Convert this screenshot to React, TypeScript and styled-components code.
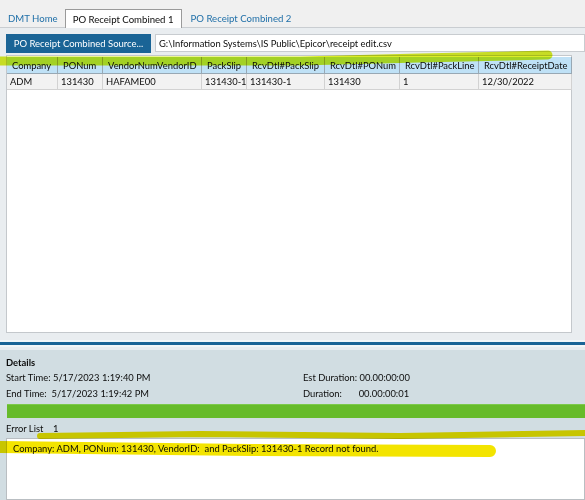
import React from "react";
import styled, { createGlobalStyle } from "styled-components";

const Global = createGlobalStyle`
  html, body { margin: 0; padding: 0; }
  body { width: 585px; height: 500px; overflow: hidden; font-family: Lato, "Liberation Sans", sans-serif; font-size: 9.4px; color: #0c0c0c; }
  * { box-sizing: border-box; }
`;

const Page = styled.div`
  position: relative;
  width: 585px;
  height: 500px;
  display: flex;
  flex-direction: column;
  background: #f0f0f0;
  overflow: hidden;
`;

const TabBar = styled.div`
  height: 28px;
  display: flex;
  align-items: flex-end;
  gap: 6px;
  padding-left: 7px;
  border-bottom: 1px solid #c9cdd1;
`;

const Tab = styled.div<{ $active?: boolean }>`
  height: 19px;
  padding: 0 ${(p) => (p.$active ? "7px" : "0")};
  margin-bottom: ${(p) => (p.$active ? "-1px" : "0")};
  margin-right: ${(p) => (p.$active ? "2px" : "0")};
  display: flex;
  align-items: center;
  white-space: nowrap;
  font-size: 9.6px;
  color: ${(p) => (p.$active ? "#0c0c0c" : "#1f6fa8")};
  background: ${(p) => (p.$active ? "#ffffff" : "transparent")};
  border: 1px solid ${(p) => (p.$active ? "#9a9a9a" : "transparent")};
  border-bottom: none;
`;

const Main = styled.div`
  height: 308px;
  background: #e9edf0;
  padding: 6px 13px 3px 6px;
  display: flex;
  flex-direction: column;
  gap: 2px;
`;

const SourceRow = styled.div`
  display: flex;
  gap: 4px;
  margin-right: -13px;
`;

const SourceButton = styled.div`
  width: 145px;
  height: 19px;
  background: #1a6496;
  color: #ffffff;
  font-size: 9.5px;
  display: flex;
  align-items: center;
  justify-content: center;
  white-space: nowrap;
`;

const PathInput = styled.div`
  flex: 1;
  height: 18px;
  background: #ffffff;
  border: 1px solid #c8ccd0;
  display: flex;
  align-items: center;
  padding-left: 3px;
  white-space: nowrap;
  overflow: hidden;
`;

const Grid = styled.div`
  flex: 1;
  background: #ffffff;
  border: 1px solid #c4c8cc;
  padding: 1px 0 0 0;
`;

const GridRow = styled.div`
  display: grid;
  grid-template-columns: 51px 45px 99px 45px 78px 75px 79px 93px;
`;

const HeadCell = styled.div`
  height: 17px;
  background: #bfe1f6;
  border-right: 1px solid #98a8b4;
  border-bottom: 1px solid #98a8b4;
  display: flex;
  align-items: center;
  padding-left: 5px;
  white-space: nowrap;
  overflow: hidden;
`;

const Cell = styled.div`
  height: 16px;
  background: #f2f2f2;
  border-right: 1px solid #d2d2d2;
  border-bottom: 1px solid #d2d2d2;
  display: flex;
  align-items: center;
  padding-left: 3px;
  white-space: nowrap;
  overflow: hidden;
`;

const Splitter = styled.div`
  height: 14px;
  background: #e9edf0;
  display: flex;
  flex-direction: column;
  justify-content: center;
`;

const SplitLine = styled.div`
  height: 7px;
  border-top: 2px solid #f2f6f8;
  border-bottom: 2px solid #f2f6f8;
  background: #1a6496;
`;

const Details = styled.div`
  flex: 1;
  background: #d1dde2;
  padding: 5px 0 0 6px;
  display: flex;
  flex-direction: column;
`;

const Title = styled.div`
  font-weight: 700;
  height: 14px;
  display: flex;
  align-items: center;
`;

const InfoGrid = styled.div`
  display: grid;
  grid-template-columns: 297px 1fr;
`;

const InfoLine = styled.div`
  height: 16px;
  display: flex;
  align-items: center;
  white-space: pre;
`;

const ProgressBar = styled.div`
  height: 14px;
  margin: 3px 0 0 1px;
  background: #66bb2a;
  border-top: 1px solid #7cc94a;
`;

const ErrorLabel = styled.div`
  height: 20px;
  padding-top: 1px;
  display: flex;
  align-items: center;
  white-space: pre;
`;

const ErrorBox = styled.div`
  flex: 1;
  background: #ffffff;
  border: 1px solid #b9bec2;
  padding: 4px 0 0 6px;
  white-space: pre;
`;

const Highlight = styled.svg`
  position: absolute;
  left: 0;
  top: 0;
  pointer-events: none;
  mix-blend-mode: multiply;
`;

const heads = ["Company", "PONum", "VendorNumVendorID", "PackSlip", "RcvDtl#PackSlip", "RcvDtl#PONum", "RcvDtl#PackLine", "RcvDtl#ReceiptDate"];
const row = ["ADM", "131430", "HAFAME00", "131430-1", "131430-1", "131430", "1", "12/30/2022"];

export default function App() {
  return (
    <>
      <Global />
      <Page>
        <TabBar>
          <Tab>DMT Home</Tab>
          <Tab $active>PO Receipt Combined 1</Tab>
          <Tab>PO Receipt Combined 2</Tab>
        </TabBar>
        <Main>
          <SourceRow>
            <SourceButton>PO Receipt Combined Source...</SourceButton>
            <PathInput>G:\Information Systems\IS Public\Epicor\receipt edit.csv</PathInput>
          </SourceRow>
          <Grid>
            <GridRow>
              {heads.map((h) => (
                <HeadCell key={h}>{h}</HeadCell>
              ))}
            </GridRow>
            <GridRow>
              {row.map((c, i) => (
                <Cell key={i}>{c}</Cell>
              ))}
            </GridRow>
          </Grid>
        </Main>
        <Splitter>
          <SplitLine />
        </Splitter>
        <Details>
          <Title>Details</Title>
          <InfoGrid>
            <InfoLine>Start Time: 5/17/2023 1:19:40 PM</InfoLine>
            <InfoLine>Est Duration: 00.00:00:00</InfoLine>
            <InfoLine>End Time:  5/17/2023 1:19:42 PM</InfoLine>
            <InfoLine>Duration:       00.00:00:01</InfoLine>
          </InfoGrid>
          <ProgressBar />
          <ErrorLabel>Error List    1</ErrorLabel>
          <ErrorBox>Company: ADM, PONum: 131430, VendorID:  and PackSlip: 131430-1 Record not found.</ErrorBox>
        </Details>
        <Highlight width="585" height="500" viewBox="0 0 585 500">
          <path d="M0 61 L300 61 L420 58 L548 55" stroke="#d4ea00" strokeWidth="9" fill="none" strokeLinecap="round" opacity="0.85" />
          <path d="M40 436 L200 434 L400 436 L585 433" stroke="#f3e400" strokeWidth="6" fill="none" strokeLinecap="round" />
          <path d="M0 447 L250 450 L490 451" stroke="#f3e400" strokeWidth="12" fill="none" strokeLinecap="round" />
        </Highlight>
      </Page>
    </>
  );
}
